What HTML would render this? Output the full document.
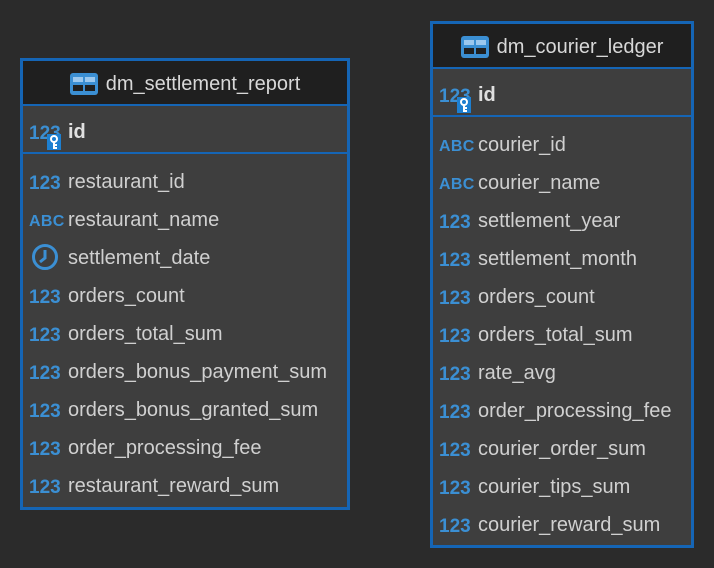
<!DOCTYPE html>
<html><head><style>
body{margin:0;width:714px;height:568px;background:#2b2b2b;font-family:"Liberation Sans",sans-serif;position:relative;overflow:hidden}
.t{position:absolute;border:3px solid #1565b5;background:#3e3e3e;box-sizing:border-box}
.h{background:#1f1f1f;height:45px;border-bottom:2px solid #1565b5;display:flex;align-items:center;justify-content:center;color:#d8d8d8;font-size:20px;padding-top:3px;box-sizing:border-box}
.h svg{margin-right:8px}
.pk{border-bottom:2px solid #1565b5;display:flex;align-items:center;color:#e0e0e0;font-size:20px;font-weight:bold;position:relative;padding-top:6px;box-sizing:content-box;height:40px}
.r{height:38px;display:flex;align-items:center;color:#d0d0d0;font-size:20px;padding-top:6px;box-sizing:border-box}
.ic{width:45px;padding-left:6px;box-sizing:border-box;color:#3b8fd3;font-weight:bold;font-size:19px;flex:none;position:relative;top:2px}
.abc{font-size:16px;letter-spacing:0.3px;display:inline-block}
.key{position:absolute;left:24px;top:11px;width:14px;height:16px;background:#1d7fd0}
</style></head><body>
<div class="t" style="left:20px;top:58px;width:330px;height:452px">
<div class="h"><svg width="28" height="22" viewBox="0 0 28 22"><rect width="28" height="22" rx="3" fill="#3b8fd3"/><rect x="3" y="4" width="10" height="5" fill="#9cc8ee"/><rect x="15" y="4" width="10" height="5" fill="#9cc8ee"/><rect x="3" y="12" width="10" height="6" fill="#1f1f1f"/><rect x="15" y="12" width="10" height="6" fill="#1f1f1f"/></svg>dm_settlement_report</div>
<div class="pk"><span class="ic">123<span class="key"><svg width="14" height="16"><circle cx="7" cy="5" r="3" fill="none" stroke="#fff" stroke-width="2"/><path d="M7 8v7M7 11h3M7 14h3" stroke="#fff" stroke-width="2"/></svg></span></span>id</div>
<div style="height:6px"></div>
<div class="r"><span class="ic">123</span>restaurant_id</div>
<div class="r"><span class="ic abc">ABC</span>restaurant_name</div>
<div class="r"><span class="ic" style="padding-left:8px"><svg width="28" height="28" viewBox="0 0 28 28"><circle cx="14" cy="14" r="11.5" fill="none" stroke="#3b8fd3" stroke-width="3"/><path d="M14 7v8l-5 4" fill="none" stroke="#3b8fd3" stroke-width="3"/></svg></span>settlement_date</div>
<div class="r"><span class="ic">123</span>orders_count</div>
<div class="r"><span class="ic">123</span>orders_total_sum</div>
<div class="r"><span class="ic">123</span>orders_bonus_payment_sum</div>
<div class="r"><span class="ic">123</span>orders_bonus_granted_sum</div>
<div class="r"><span class="ic">123</span>order_processing_fee</div>
<div class="r"><span class="ic">123</span>restaurant_reward_sum</div>
</div>
<div class="t" style="left:430px;top:21px;width:264px;height:527px">
<div class="h"><svg width="28" height="22" viewBox="0 0 28 22"><rect width="28" height="22" rx="3" fill="#3b8fd3"/><rect x="3" y="4" width="10" height="5" fill="#9cc8ee"/><rect x="15" y="4" width="10" height="5" fill="#9cc8ee"/><rect x="3" y="12" width="10" height="6" fill="#1f1f1f"/><rect x="15" y="12" width="10" height="6" fill="#1f1f1f"/></svg>dm_courier_ledger</div>
<div class="pk"><span class="ic">123<span class="key"><svg width="14" height="16"><circle cx="7" cy="5" r="3" fill="none" stroke="#fff" stroke-width="2"/><path d="M7 8v7M7 11h3M7 14h3" stroke="#fff" stroke-width="2"/></svg></span></span>id</div>
<div style="height:6px"></div>
<div class="r"><span class="ic abc">ABC</span>courier_id</div>
<div class="r"><span class="ic abc">ABC</span>courier_name</div>
<div class="r"><span class="ic">123</span>settlement_year</div>
<div class="r"><span class="ic">123</span>settlement_month</div>
<div class="r"><span class="ic">123</span>orders_count</div>
<div class="r"><span class="ic">123</span>orders_total_sum</div>
<div class="r"><span class="ic">123</span>rate_avg</div>
<div class="r"><span class="ic">123</span>order_processing_fee</div>
<div class="r"><span class="ic">123</span>courier_order_sum</div>
<div class="r"><span class="ic">123</span>courier_tips_sum</div>
<div class="r"><span class="ic">123</span>courier_reward_sum</div>
</div>
</body></html>
